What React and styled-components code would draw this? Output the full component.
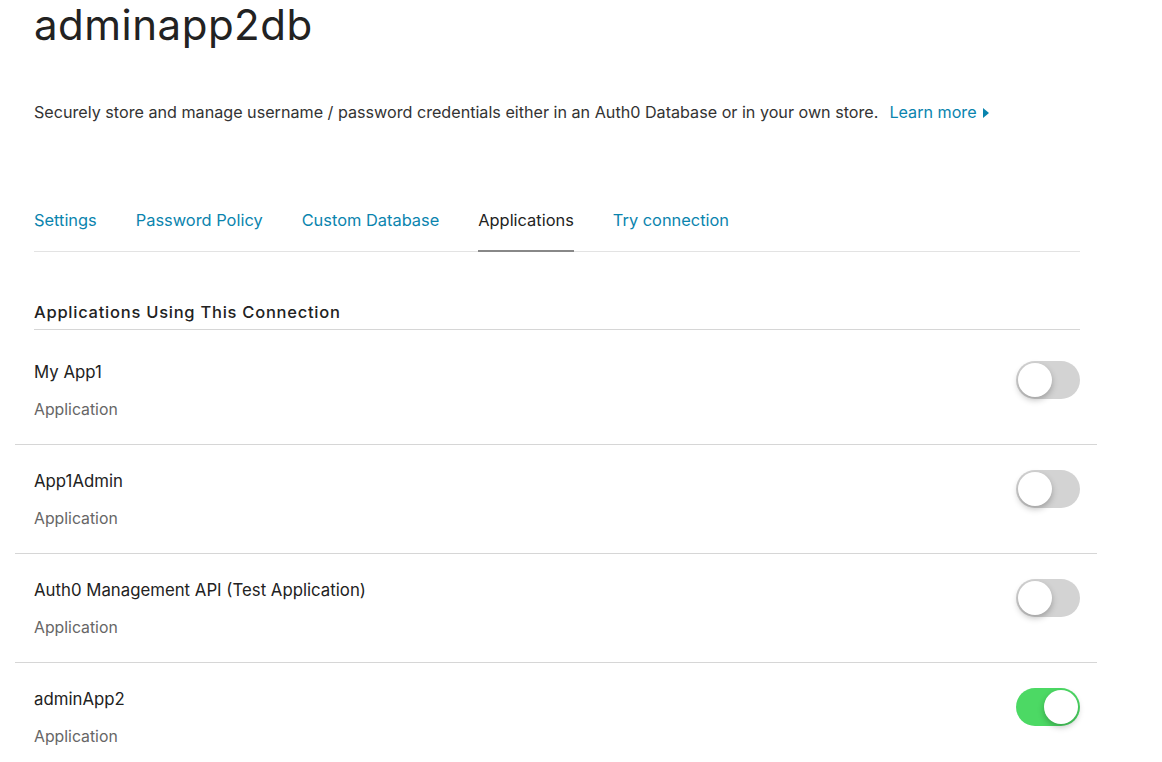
import React, { useState } from 'react'
import styled, { createGlobalStyle } from 'styled-components'

const GlobalStyle = createGlobalStyle`
  html, body {
    margin: 0;
    padding: 0;
    background: #fff;
    font-family: Inter, "Noto Sans", sans-serif;
    color: #222;
  }
`

const apps = [
  { name: 'My App1', type: 'Application', enabled: false },
  { name: 'App1Admin', type: 'Application', enabled: false },
  { name: 'Auth0 Management API (Test Application)', type: 'Application', enabled: false },
  { name: 'adminApp2', type: 'Application', enabled: true },
]

const tabs = ['Settings', 'Password Policy', 'Custom Database', 'Applications', 'Try connection']

const App = () => {
  const [list, setList] = useState(apps)

  const toggle = (i) => {
    setList(list.map((a, idx) => (idx === i ? { ...a, enabled: !a.enabled } : a)))
  }

  return (
    <Page>
      <GlobalStyle />
      <Title>adminapp2db</Title>
      <Description>
        Securely store and manage username / password credentials either in an Auth0 Database or in your own store.
        <LearnMore href="#">
          Learn more
          <Caret viewBox="0 0 6 10"><path d="M0 0 L6 5 L0 10 Z" fill="currentColor" /></Caret>
        </LearnMore>
      </Description>
      <TabBar>
        {tabs.map((t) => (
          <Tab key={t} active={t === 'Applications'}>{t}</Tab>
        ))}
      </TabBar>
      <SectionHeading>Applications Using This Connection</SectionHeading>
      <List>
        {list.map((a, i) => (
          <Row key={a.name}>
            <Info>
              <AppName>{a.name}</AppName>
              <AppType>{a.type}</AppType>
            </Info>
            <Switch on={a.enabled} onClick={() => toggle(i)}>
              <Knob on={a.enabled} />
            </Switch>
          </Row>
        ))}
      </List>
    </Page>
  )
}

export default App

const Page = styled.div`
  width: 1046px;
  padding: 0 0 0 34px;
`

const Title = styled.h1`
  margin: 0;
  padding-top: 2px;
  font-size: 42px;
  font-weight: 400;
  line-height: 46px;
  color: #222;
  letter-spacing: 0.5px;
`

const Description = styled.p`
  margin: 51px 0 0;
  font-size: 16.15px;
  line-height: 26px;
  color: #333;
`

const LearnMore = styled.a`
  margin-left: 11px;
  color: #0a84ae;
  text-decoration: none;
`

const Caret = styled.svg`
  width: 6px;
  height: 10px;
  margin-left: 6px;
  vertical-align: 0px;
`

const TabBar = styled.div`
  display: flex;
  gap: 39px;
  margin-top: 74px;
  border-bottom: 1px solid #e3e3e3;
`

const Tab = styled.div`
  padding: 10px 0 19px;
  font-size: 16.4px;
  line-height: 22px;
  color: ${(p) => (p.active ? '#222' : '#0a84ae')};
  border-bottom: 2px solid ${(p) => (p.active ? '#888' : 'transparent')};
  margin-bottom: -1px;
  cursor: pointer;
`

const SectionHeading = styled.h2`
  margin: 49px 0 0;
  padding-bottom: 6px;
  font-size: 16.5px;
  line-height: 22px;
  font-weight: 500;
  letter-spacing: 0.75px;
  color: #222;
  border-bottom: 1px solid #d6d6d6;
`

const List = styled.div`
  margin: 6px -17px 0 -19px;
`

const Row = styled.div`
  display: flex;
  align-items: flex-start;
  justify-content: space-between;
  padding: 25px 17px 0 19px;
  height: 109px;
  box-sizing: border-box;
  border-bottom: 1px solid #d6d6d6;

  &:last-child {
    border-bottom: none;
  }
`

const Info = styled.div`
  display: flex;
  flex-direction: column;
  gap: 16px;
`

const AppName = styled.div`
  font-size: 16.8px;
  line-height: 22px;
  color: #222;
`

const AppType = styled.div`
  font-size: 15.8px;
  line-height: 22px;
  color: #666;
`

const Switch = styled.div`
  position: relative;
  width: 64px;
  height: 38px;
  border-radius: 19px;
  background: ${(p) => (p.on ? '#4cd964' : '#d3d3d3')};
  cursor: pointer;
`

const Knob = styled.div`
  position: absolute;
  top: 2px;
  left: ${(p) => (p.on ? '28px' : '2px')};
  width: 34px;
  height: 34px;
  border-radius: 50%;
  background: #fff;
  box-shadow: 0 3px 6px rgba(0, 0, 0, 0.25);
`
